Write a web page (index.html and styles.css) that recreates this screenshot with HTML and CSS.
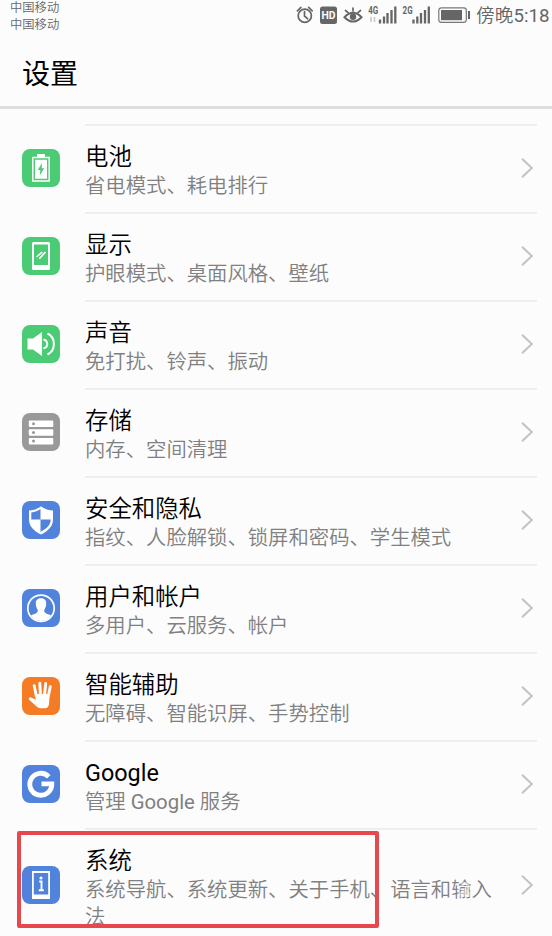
FILE: index.html
```
<!DOCTYPE html>
<html lang="zh-CN">
<head>
<meta charset="utf-8">
<title>设置</title>
<link rel="stylesheet" href="styles.css">
</head>
<body>
<div class="screen">
  <header class="status">
    <div class="carriers"><span>中国移动</span><span>中国移动</span></div>
    <svg class="status-icons" width="177" height="30" viewBox="295 0 177 30">
      <g fill="none" stroke="#666" stroke-width="1.7" stroke-linecap="round">
        <circle cx="304.800" cy="15.800" r="6.600"/>
        <path d="M304.500 11.500v4.500l3.200 2.800M297.400 10.800l3.500-3.500M312.200 10.800l-3.500-3.500"/>
        <path d="M344.500 17.200Q353 8.500 361.500 17.200Q353 26 344.500 17.200Z" stroke-width="2"/>
        <path d="M345.500 10.500l2.600 2.200M353 8v3M360.500 10.500l-2.600 2.200"/>
      </g>
      <circle cx="353" cy="16.800" r="3.200" fill="#666"/>
      <rect x="320" y="6.500" width="17" height="17.500" rx="2.500" fill="#666"/>
      <text class="hd" x="321.500" y="19" textLength="14" lengthAdjust="spacingAndGlyphs">HD</text>
      <text class="net" x="368.200" y="14" textLength="10" lengthAdjust="spacingAndGlyphs">4G</text>
      <text class="net" x="402.600" y="14" textLength="10" lengthAdjust="spacingAndGlyphs">2G</text>
      <path d="M371 17v5M374.500 17v5" stroke="#c4c4c4" stroke-width="1.500"/>
      <path d="M380 19.500V23.500M384 16.500V23.500M387.500 13V23.500M391.500 10V23.500M395.300 6.500V23.500M413.500 19.500V23.500M417.300 16.500V23.500M421 13V23.500M425 10V23.500M428.800 6.500V23.500" stroke="#666" stroke-width="2.300"/>
      <rect x="438.800" y="7.800" width="27.500" height="14.500" rx="2.500" fill="none" stroke="#777" stroke-width="1.200"/>
      <rect x="441" y="10" width="21" height="10.200" fill="#666"/>
      <path d="M469 11v8" stroke="#666" stroke-width="2"/>
    </svg>
    <div class="clock">傍晚<span class="latin">5:18</span></div>
  </header>
  <h1>设置</h1>
  <main class="list">
    <section class="row">
      <svg class="icon green" viewBox="0 0 38 38"><path d="M15 5h8v3h-8z" fill="#fff"/><rect x="10.800" y="8.500" width="16.400" height="23.500" fill="none" stroke="#fff" stroke-width="1.500"/><path d="M13 10.700h12v19.100H13z" fill="#fff"/><path d="M20 14l-4.300 7h2.700l-.7 5.500 4.600-7.300h-2.700z" fill="#4acb74"/></svg>
      <div class="text"><h2>电池</h2><p>省电模式、耗电排行</p></div>
      <svg class="arrow" viewBox="0 0 12 20"><path d="M1 .8L10.800 10 1 19.200"/></svg>
    </section>
    <section class="row">
      <svg class="icon green" viewBox="0 0 38 38"><path d="M11.500 5h15a1.500 1.500 0 0 1 1.500 1.500v25a1.500 1.500 0 0 1-1.500 1.500h-15a1.500 1.500 0 0 1-1.500-1.500v-25A1.500 1.500 0 0 1 11.500 5zM12 7.500V28h14V7.500z" fill="#fff" fill-rule="evenodd"/><path d="M14.500 20l5.800-5M17.300 21.800l6.200-6.800" stroke="#fff" stroke-width="1.600"/></svg>
      <div class="text"><h2>显示</h2><p>护眼模式、桌面风格、壁纸</p></div>
      <svg class="arrow" viewBox="0 0 12 20"><path d="M1 .8L10.800 10 1 19.200"/></svg>
    </section>
    <section class="row">
      <svg class="icon green" viewBox="0 0 38 38"><path d="M5.500 13.500H11L20 7v24l-9-6.500H5.500z" fill="#fff"/><path d="M21.500 14.500c5 1.500 5 7.500 0 9M25.500 8.500c8.500 4 8.500 17 0 21" fill="none" stroke="#fff" stroke-width="2"/></svg>
      <div class="text"><h2>声音</h2><p>免打扰、铃声、振动</p></div>
      <svg class="arrow" viewBox="0 0 12 20"><path d="M1 .8L10.800 10 1 19.200"/></svg>
    </section>
    <section class="row">
      <svg class="icon gray" viewBox="0 0 38 38"><g fill="#fff"><rect x="6.800" y="7.500" width="24.500" height="6.500" rx="1"/><rect x="6.800" y="16.200" width="24.500" height="6.500" rx="1"/><rect x="6.800" y="24.900" width="24.500" height="6.500" rx="1"/></g><g fill="#999"><circle cx="11.500" cy="10.700" r="1.500"/><circle cx="11.500" cy="19.400" r="1.500"/><circle cx="11.500" cy="28.100" r="1.500"/></g></svg>
      <div class="text"><h2>存储</h2><p>内存、空间清理</p></div>
      <svg class="arrow" viewBox="0 0 12 20"><path d="M1 .8L10.800 10 1 19.200"/></svg>
    </section>
    <section class="row">
      <svg class="icon blue" viewBox="0 0 38 38"><path d="M19 5.300c3.300 2.600 7 4 12 4.200v9c0 7-5 11.500-12 15-7-3.500-12-8-12-15v-9c5-.2 8.700-1.600 12-4.200z" fill="#fff"/><path d="M18.500 8v10.500H9.300V11.500c3.700-.3 6.700-1.600 9.200-3.500zM18.500 18.500h10.200c0 5.300-3.800 9.300-10.200 12.300z" fill="#5182dc"/></svg>
      <div class="text"><h2>安全和隐私</h2><p>指纹、人脸解锁、锁屏和密码、学生模式</p></div>
      <svg class="arrow" viewBox="0 0 12 20"><path d="M1 .8L10.800 10 1 19.200"/></svg>
    </section>
    <section class="row">
      <svg class="icon blue" viewBox="0 0 38 38"><circle cx="19" cy="19.300" r="13.200" fill="none" stroke="#fff" stroke-width="1.700"/><path d="M19 9.300c4 0 5.500 2.500 5.200 6-.2 3-1.300 4.500-2 6 0 2.300.8 3 6.800 5-2.300 3.900-5.500 5.700-10 5.700s-7.700-1.800-10-5.700c6-2 6.800-2.700 6.800-5-.7-1.500-1.800-3-2-6-.3-3.500 1.200-6 5.200-6z" fill="#fff"/></svg>
      <div class="text"><h2>用户和帐户</h2><p>多用户、云服务、帐户</p></div>
      <svg class="arrow" viewBox="0 0 12 20"><path d="M1 .8L10.800 10 1 19.200"/></svg>
    </section>
    <section class="row">
      <svg class="icon orange" viewBox="0 0 38 38"><path d="M14.300 19L12.200 8.700M18.400 17L17.800 6.300M22.600 17L23.700 6.500M26.300 19L28.300 9.700M14.500 25L8.200 21.700" fill="none" stroke="#fff" stroke-width="2.900" stroke-linecap="round"/><path d="M13 17h14.700l-.7 10c-.2 2.300-1.500 4-3.500 4.300h-5c-2-.3-3.500-1.300-5-2.800L7 22.500l1.300-2 5.500 2.300z" fill="#fff"/></svg>
      <div class="text"><h2>智能辅助</h2><p>无障碍、智能识屏、手势控制</p></div>
      <svg class="arrow" viewBox="0 0 12 20"><path d="M1 .8L10.800 10 1 19.200"/></svg>
    </section>
    <section class="row">
      <svg class="icon blue" viewBox="0 0 38 38"><path d="M26.800 11.700A11 11 0 1 0 29.800 18.900H19.500" fill="none" stroke="#fff" stroke-width="4.900"/></svg>
      <div class="text"><h2><span class="latin">Google</span></h2><p>管理 <span class="latin">Google</span> 服务</p></div>
      <svg class="arrow" viewBox="0 0 12 20"><path d="M1 .8L10.800 10 1 19.200"/></svg>
    </section>
    <section class="row tall">
      <svg class="icon blue" viewBox="0 0 38 38"><path d="M10 5h18v28H10zM11.800 7v21.500h14.400V7z" fill="#fff" fill-rule="evenodd"/><path d="M17.200 15.500h2.300v8.500M16.800 24.300h5" fill="none" stroke="#fff" stroke-width="1.900"/><circle cx="19" cy="12" r="1.600" fill="#fff"/></svg>
      <div class="text"><h2>系统</h2><p>系统导航、系统更新、关于手机、语言和输入法</p></div>
      <svg class="arrow" viewBox="0 0 12 20"><path d="M1 .8L10.800 10 1 19.200"/></svg>
    </section>
  </main>
  <div class="highlight"></div>
  <svg class="paw" viewBox="0 0 18 18"><ellipse cx="3" cy="8" rx="2" ry="2.600"/><ellipse cx="6.700" cy="3.600" rx="2" ry="2.700"/><ellipse cx="11.500" cy="3.600" rx="2" ry="2.700"/><ellipse cx="15" cy="8" rx="2" ry="2.600"/><path d="M9 8c2.500 0 3 2.500 5 4.500 2 2.500 0 5-2.500 4.500-2-.4-3-.4-5 0C4 17.500 2 15 4 12.500 6 10.500 6.500 8 9 8z"/></svg>
</div>
</body>
</html>
```
FILE: styles.css
```
* { box-sizing: border-box; margin: 0; padding: 0; }
body {
  background: #fcfcfc;
  font-family: Roboto, "Noto Sans CJK SC", sans-serif;
}
.screen {
  position: relative;
  width: 552px;
  height: 936px;
  overflow: hidden;
}
.status {
  display: flex;
  height: 36px;
  padding-left: 10px;
  color: #666;
}
.carriers {
  display: flex;
  flex-direction: column;
  width: 285px;
  font-size: 12.3px;
  font-weight: 350;
  line-height: 17px;
}
.status-icons { flex: none; }
.hd { font: 700 11px Roboto, sans-serif; fill: #fcfcfc; }
.net { font: 700 10px Roboto, sans-serif; fill: #666; }
.clock {
  margin-left: 4px;
  font-size: 18.7px;
  font-weight: 350;
  line-height: 33px;
  white-space: nowrap;
}
h1 {
  height: 73px;
  padding-left: 22px;
  border-bottom: 3px solid #dedede;
  font-size: 28px;
  font-weight: 400;
  line-height: 77px;
  color: #000;
}
.list { padding: 15px 15px 0 22px; }
.row {
  display: flex;
  align-items: center;
  height: 88px;
}
.icon {
  flex: none;
  width: 38px;
  height: 38px;
  border-radius: 8px;
}
.green { background: #4acb74; }
.gray { background: #999; }
.blue { background: #5182dc; }
.orange { background: #f57c24; }
.text {
  flex: 1;
  height: 100%;
  margin-left: 25px;
  padding-top: 15px;
  border-top: 2px solid #eee;
}
h2 {
  font-size: 23.4px;
  font-weight: 350;
  line-height: 32px;
  color: #000;
}
p {
  width: 415px;
  font-size: 20.35px;
  font-weight: 350;
  line-height: 27px;
  color: #808080;
}
.latin { font-weight: 400; }
.arrow {
  flex: none;
  width: 12px;
  height: 20px;
  margin: 0 4px 0 -16px;
  fill: none;
  stroke: #c3c3c3;
  stroke-width: 2;
}
.tall { height: 114px; }
.highlight {
  position: absolute;
  left: 17px;
  top: 831px;
  width: 362px;
  height: 97px;
  border: 4px solid #e6484e;
  border-radius: 2px;
}
.paw {
  position: absolute;
  left: 456px;
  top: 880px;
  width: 18px;
  height: 18px;
  fill: #fff;
  opacity: 0.45;
}
```
